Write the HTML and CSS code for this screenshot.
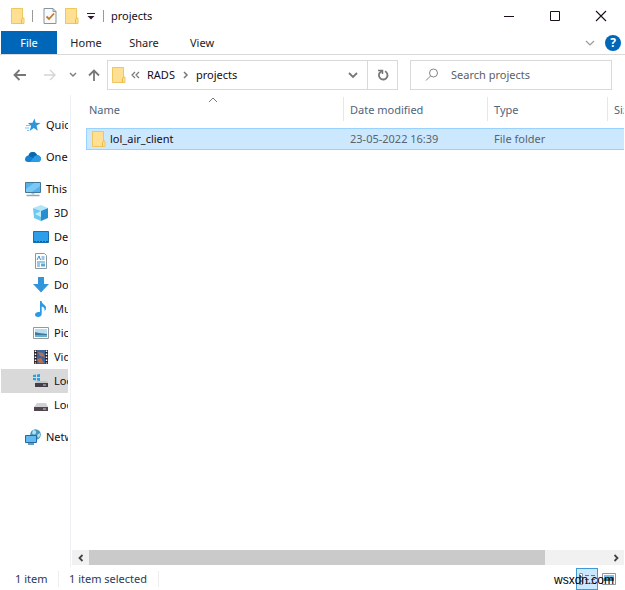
FILE: index.html
```html
<!DOCTYPE html>
<html lang="en">
<head>
<meta charset="utf-8">
<title>projects</title>
<link rel="stylesheet" href="styles.css">
</head>
<body>
<svg class="defs" aria-hidden="true">
  <symbol id="folder" viewBox="0 0 14 16">
    <path d="M.5 .5h11v9.500h1.500v5.500H.5z" fill="#ffe093" stroke="#eec65e"/>
    <path d="M10.500 15.500v-4l1-1.500" fill="none" stroke="#e6b94c"/>
  </symbol>
</svg>
<div class="window">
  <header class="titlebar">
    <svg class="folder" aria-hidden="true"><use href="#folder"/></svg>
    <span class="bar"></span>
    <button class="quick" aria-label="Properties">
      <svg width="14" height="16" viewBox="0 0 14 16"><path d="M1 .5h9l3 3v12H1z" fill="#f8fafc" stroke="#8794a3"/><path d="M10 .5v3h3" fill="none" stroke="#8794a3"/><path d="M3.500 8.500l2.500 2.500 5-5.500" fill="none" stroke="#c57a22" stroke-width="1.800"/></svg>
    </button>
    <button class="quick" aria-label="New folder"><svg class="folder"><use href="#folder"/></svg></button>
    <button class="quick" aria-label="Customize toolbar">
      <svg width="8" height="8" viewBox="0 0 8 8"><path d="M0 1.500h8" stroke="#2b1b2b"/><path d="M.5 4h7L4 7.500z" fill="#2b1b2b"/></svg>
    </button>
    <span class="bar"></span>
    <h1 class="title">projects</h1>
    <div class="controls">
      <button aria-label="Minimize"><svg width="12" height="12" viewBox="0 0 12 12"><path d="M1 6.500h10" stroke="#1b0f1b"/></svg></button>
      <button aria-label="Maximize"><svg width="12" height="12" viewBox="0 0 12 12"><path d="M1.500 1.500h9v9h-9z" fill="none" stroke="#1b0f1b"/></svg></button>
      <button aria-label="Close"><svg width="12" height="12" viewBox="0 0 12 12"><path d="M1 1l10 10M11 1L1 11" stroke="#1b0f1b" stroke-width="1.100"/></svg></button>
    </div>
  </header>
  <nav class="ribbon" aria-label="Ribbon">
    <button class="tab file">File</button>
    <button class="tab">Home</button>
    <button class="tab">Share</button>
    <button class="tab">View</button>
    <div class="ribbon-end">
      <button aria-label="Expand ribbon"><svg width="10" height="8" viewBox="0 0 10 8"><path d="M1 2l4 4 4-4" fill="none" stroke="#9a9a9a" stroke-width="1.200"/></svg></button>
      <button class="help" aria-label="Help">?</button>
    </div>
  </nav>
  <div class="address-row">
    <div class="nav">
      <button aria-label="Back"><svg width="14" height="12" viewBox="0 0 14 12"><path d="M6.500 1L1.500 6l5 5M2 6h11" fill="none" stroke="#777" stroke-width="1.800"/></svg></button>
      <button aria-label="Forward"><svg width="14" height="12" viewBox="0 0 14 12"><path d="M7 1l5 5-5 5M12 6H1" fill="none" stroke="#d4d4d4" stroke-width="1.300"/></svg></button>
      <button class="recent" aria-label="Recent locations"><svg width="8" height="6" viewBox="0 0 8 6"><path d="M1 1l3 3 3-3" fill="none" stroke="#808080" stroke-width="1.500"/></svg></button>
      <button aria-label="Up"><svg width="12" height="14" viewBox="0 0 12 14"><path d="M1 7.500l5-5 5 5M6 3v10" fill="none" stroke="#777" stroke-width="1.800"/></svg></button>
    </div>
    <div class="address">
      <svg class="folder" aria-hidden="true"><use href="#folder"/></svg>
      <svg class="sep" width="9" height="8" viewBox="0 0 9 8" aria-hidden="true"><path d="M4 1L1 4l3 3M8 1L5 4l3 3" fill="none" stroke="#777" stroke-width="1.200"/></svg>
      <a href="#rads">RADS</a>
      <svg class="sep" width="6" height="8" viewBox="0 0 6 8" aria-hidden="true"><path d="M1 1l3 3-3 3" fill="none" stroke="#777" stroke-width="1.500"/></svg>
      <a href="#projects">projects</a>
      <button class="history" aria-label="Previous locations"><svg width="10" height="8" viewBox="0 0 10 8"><path d="M1 2l4 4 4-4" fill="none" stroke="#777" stroke-width="1.800"/></svg></button>
      <button class="refresh" aria-label="Refresh"><svg width="12" height="12" viewBox="0 0 12 12"><path d="M8 2.300A4.300 4.300 0 1 1 2.500 4l2.300-2" fill="none" stroke="#777" stroke-width="1.800"/><path d="M1 1.500h4.500V5" fill="none" stroke="#777" stroke-width="1.500"/></svg></button>
    </div>
    <label class="search">
      <svg width="14" height="14" viewBox="0 0 14 14" aria-hidden="true"><circle cx="8.500" cy="5" r="4" fill="none" stroke="#858585"/><path d="M5.500 8L1 12.500" stroke="#858585"/></svg>
      <input type="text" placeholder="Search projects" aria-label="Search projects">
    </label>
  </div>
  <div class="body">
    <nav class="tree" aria-label="Folders">
      <a class="root" href="#quick"><svg viewBox="0 0 16 16"><path d="M9.500 1.500l1.200 4.300 4.800.2-4 2.700 1.300 5-4-2.700-4.200 3 1.500-5L3 6l4.500-.2z" fill="#2d95dc"/><path d="M1 8.500h4M0 11h4M2 13.500h2" stroke="#80c5ed"/></svg>Quick access</a>
      <a class="root" href="#onedrive"><svg viewBox="0 0 16 16"><path d="M0 10.500C0 8 2 6.500 3.500 6.500 4 4 6 3 8 3s3.500 1.500 4 3c2.500 0 4 1.800 4 3.700S14.500 13 13 13H3C1 13 0 12 0 10.500z" fill="#1681d1"/><path d="M3.500 6.500C4 4 6 3 8 3s3.500 1.500 4 3L8 9z" fill="#0869ae"/><path d="M5 13l4-5c1-1.500 3-2 4-1.500 2 .5 3 2 3 3.500S14.500 13 13 13z" fill="#2a9be5"/></svg>OneDrive</a>
      <a class="root" href="#pc"><svg viewBox="0 0 16 16"><path d="M.5 1.500h15v10H.5z" fill="#55b2ee" stroke="#437998"/><path d="M1 8l8-6h6v3L7 11H1z" fill="#7bcaf5"/><path d="M6.500 12h3v1.500h-3z" fill="#b7c5ce"/><path d="M1.500 14.500h13" stroke="#9aa6ad" stroke-width="1.500"/></svg>This PC</a>
      <a href="#objects"><svg viewBox="0 0 16 16"><path d="M8 0l7 3-7 3-8-3z" fill="#b2e5f8"/><path d="M0 3l8 3v10l-7-3z" fill="#6cc9ef"/><path d="M15 3L8 6v10l7-3z" fill="#278fcf"/><path d="M2 9l6-3v6z" fill="#c1ecfb"/></svg>3D Objects</a>
      <a href="#desktop"><svg viewBox="0 0 16 16"><path d="M.5 2.500h15v11H.5z" fill="#2c9eea" stroke="#176fab"/><path d="M1 12.500h14" stroke="#0e609b" stroke-dasharray="2 1"/></svg>Desktop</a>
      <a href="#documents"><svg viewBox="0 0 16 16"><path d="M2.500 .5h9l2 2v13h-11z" fill="#fff" stroke="#8d989f"/><path d="M4 7l2-4 1.500 4M8.500 4h3M8.500 6h3M4 9h8M4 11h3M4 13h3" fill="none" stroke="#3b91c8"/><path d="M8 10.500h4v3H8z" fill="#58acd8"/></svg>Documents</a>
      <a href="#downloads"><svg viewBox="0 0 16 16"><path d="M5 0h6v7h5l-8 8.500L0 7h5z" fill="#3095db"/></svg>Downloads</a>
      <a href="#music"><svg viewBox="0 0 16 16"><path d="M7 0h1.500c.5 3.500 5 4 4.500 7.500-.3 1.500-1 2-1.500 2.500.5-3-1-4-2.800-4.500V13c0 2-1.700 3-3.700 3S2 15 2 13.500 4 10.500 7 11z" fill="#2a9ae2"/></svg>Music</a>
      <a href="#pictures"><svg viewBox="0 0 16 16"><path d="M.5 2.500h15v11H.5z" fill="#fff" stroke="#929a9f"/><path d="M2 4h12v8H2z" fill="#b5def2"/><path d="M2 7l4 1 8 1v3H2z" fill="#407a99"/><path d="M2 10h12v2H2z" fill="#68aecd"/></svg>Pictures</a>
      <a href="#videos"><svg viewBox="0 0 16 16"><path d="M1 1h14v14H1z" fill="#28212e"/><path d="M4 1h8v14H4z" fill="#3c65a0"/><path d="M5 3l5 1 2 4-5-1zM4 10l4-1 3 5H6z" fill="#b66f4f"/><path d="M2.500 1.500v13M13.500 1.500v13" stroke="#fff" stroke-width="1.500" stroke-dasharray="1.500 1.500"/></svg>Videos</a>
      <a class="current" href="#c" aria-current="true"><svg viewBox="0 0 16 16"><path d="M0 2l3-.5V4H0zM4 1.500L7 1v3H4zM0 5h3v2.500L0 7zM4 5h3v3l-3-.5z" fill="#2c9fe2"/><path d="M4 8h10l1 2H2z" fill="#c5c5c8"/><path d="M2 10h13v4H2z" fill="#473c4a"/><path d="M10 12h3" stroke="#a9e5ca"/></svg>Local Disk (C:)</a>
      <a href="#d"><svg viewBox="0 0 16 16"><path d="M4 6h9l2 4H1z" fill="#d0d0d2"/><path d="M1 10h14v4H1z" fill="#51464f"/><path d="M10 12h3" stroke="#b8d9cb"/></svg>Local Disk (D:)</a>
      <a class="root network" href="#network"><svg viewBox="0 0 16 16"><circle cx="10.500" cy="5.500" r="5.300" fill="#4795bf"/><path d="M8 1c2 0 4 1 3 3S8 6 7 4zM12 6l3-2v3l-2 2z" fill="#b3dfed"/><path d="M.5 6.500h11v7H.5z" fill="#62baf0" stroke="#26699c"/><path d="M3 15h6" stroke="#367daf" stroke-width="1.500"/></svg>Network</a>
    </nav>
    <main class="files">
      <svg class="sort" width="10" height="6" viewBox="0 0 10 6" aria-hidden="true"><path d="M1 5l4-4 4 4" fill="none" stroke="#777"/></svg>
      <table>
        <colgroup><col><col class="date"><col class="type"><col class="size"></colgroup>
        <thead><tr><th><div>Name</div></th><th><div>Date modified</div></th><th><div>Type</div></th><th><div>Size</div></th></tr></thead>
        <tbody><tr><td><div class="name"><svg class="folder" aria-hidden="true"><use href="#folder"/></svg>lol_air_client</div></td><td>23-05-2022 16:39</td><td>File folder</td><td></td></tr></tbody>
      </table>
      <div class="scroll">
        <button aria-label="Scroll left"><svg width="8" height="8" viewBox="0 0 8 8"><path d="M5.500 1l-3 3 3 3" fill="none" stroke="#444" stroke-width="1.800"/></svg></button>
        <div class="track"><div class="thumb"></div></div>
        <button aria-label="Scroll right"><svg width="8" height="8" viewBox="0 0 8 8"><path d="M2.500 1l3 3-3 3" fill="none" stroke="#444" stroke-width="1.800"/></svg></button>
      </div>
    </main>
  </div>
  <footer class="status">
    <span class="count">1 item</span>
    <span class="chosen">1 item selected</span>
    <div class="views">
      <button class="active" aria-label="Details view"><svg width="18" height="14" viewBox="0 0 18 14"><path d="M1.500 1.500h3v3h-3zM1.500 5.500h3v3h-3zM1.500 9.500h3v3h-3z" fill="#fff" stroke="#8b96a0"/><path d="M7 3.500h10M7 7.500h10M7 11.500h10" stroke="#6b757e" stroke-dasharray="4 2"/></svg></button>
      <button aria-label="Large icons view"><svg width="14" height="12" viewBox="0 0 14 12"><path d="M.5 .5h13v11H.5z" fill="#fff" stroke="#8b96a0"/><path d="M2 2h10v5H2z" fill="#7cc0e6"/><path d="M2 5l5 1 5-2v4H2z" fill="#35789c"/></svg></button>
    </div>
    <span class="mark">wsxdn.com</span>
  </footer>
</div>
</body>
</html>
```
FILE: styles.css
```css
* { box-sizing: border-box; }
body {
  margin: 0;
  background: #fff;
  color: #140c18;
  font: 11px/16px "Noto Sans", "Open Sans", sans-serif;
}
button {
  display: flex;
  align-items: center;
  justify-content: center;
  padding: 0;
  border: 0;
  background: none;
  color: inherit;
  font: inherit;
}
a { color: inherit; text-decoration: none; }
svg { display: block; flex: none; }
.defs { position: absolute; width: 0; height: 0; }
.folder { width: 14px; height: 16px; }
.window { display: flex; flex-direction: column; height: 100vh; overflow: hidden; }

.titlebar { display: flex; align-items: center; height: 31px; padding: 0 1px 0 11px; flex: none; }
.bar { width: 1px; height: 12px; background: #999; margin: 0 10px 0 7px; }
.quick { margin-right: 8px; }
.quick + .bar { margin: 0 7px 0 0; }
.title { margin: 0; font-size: 11px; font-weight: 400; }
.controls { display: flex; margin-left: auto; height: 100%; }
.controls button { width: 46px; }

.ribbon { display: flex; height: 24px; border-bottom: 1px solid #dadada; padding-left: 1px; flex: none; }
.tab { width: 58px; color: #222; }
.tab.file { width: 56px; background: #0067b8; color: #fff; }
.ribbon-end { display: flex; align-items: center; gap: 10px; margin-left: auto; padding-right: 4px; }
.help { width: 16px; height: 16px; border-radius: 50%; background: #0067b8; color: #fff; font-size: 12px; font-weight: 700; }

.address-row { display: flex; align-items: center; height: 40px; padding-right: 13px; flex: none; }
.nav { display: flex; align-items: center; width: 107px; padding-left: 13px; gap: 16px; flex: none; }
.nav .recent { margin: 0 -5px 0 -4px; }
.address { display: flex; align-items: center; flex: 291 1 291px; min-width: 0; height: 30px; border: 1px solid #d9d9d9; padding-left: 4px; }
.address a { margin: 0 8px 0 7px; }
.address .folder { margin-right: 5px; }
.history { margin-left: auto; width: 29px; height: 28px; }
.refresh { width: 30px; height: 28px; border-left: 1px solid #d9d9d9; }
.search { display: flex; align-items: center; flex: 202 1 202px; min-width: 0; height: 30px; margin-left: 12px; border: 1px solid #d9d9d9; padding-left: 14px; gap: 12px; }
.search input { flex: 1; min-width: 0; border: 0; padding: 0; outline: 0; background: none; font: inherit; }
.search input::placeholder { color: #606060; opacity: 1; }

.body { display: flex; flex: 1; min-height: 0; }
.tree { width: 71px; border-right: 1px solid #edf1f5; padding: 18px 2px 0 1px; flex: none; }
.tree a { display: flex; align-items: center; gap: 5px; height: 24px; padding-left: 32px; overflow: hidden; white-space: nowrap; }
.tree .root { padding-left: 24px; }
.tree .root + .root, .tree .network { margin-top: 8px; }
.tree svg { width: 16px; height: 16px; }
.tree .current { background: #d9d9d9; }

.files { position: relative; display: flex; flex-direction: column; flex: 1; min-width: 0; }
.sort { position: absolute; left: 137px; top: 2px; }
table { table-layout: fixed; width: calc(100% - 16px); margin: 0 1px 0 15px; border-spacing: 0; }
.date { width: 144px; }
.type { width: 120px; }
.size { width: 17px; }
th { height: 33px; padding: 2px 0 7px; text-align: left; font-weight: 400; color: #52647a; vertical-align: top; }
th div { height: 24px; padding: 5px 0 0 6px; border-left: 1px solid #e3e8ec; overflow: hidden; white-space: nowrap; }
th:first-child div { border: 0; padding-left: 3px; }
td { height: 22px; padding: 0 0 0 7px; background: #cce8ff; border: solid #99d1ff; border-width: 1px 0; color: #59636d; }
td:first-child { padding-left: 5px; border-left-width: 1px; color: #140c18; }
.name { display: flex; align-items: center; gap: 4px; }
.scroll { display: flex; height: 15px; margin: auto 1px 2px; background: #f1f1f1; }
.scroll button { width: 17px; }
.track { flex: 1; }
.thumb { width: 88%; height: 100%; background: #cacaca; }

.status { position: relative; display: flex; align-items: center; height: 23px; padding-left: 15px; color: #28395c; flex: none; }
.status span { white-space: nowrap; }
.count { width: 44px; border-right: 1px solid #eee; }
.chosen { width: 90px; margin-left: 10px; border-right: 1px solid #eee; }
.views { display: flex; align-items: center; margin-left: auto; padding-right: 9px; gap: 4px; }
.views .active { width: 22px; height: 22px; background: #cce8ff; border: 1px solid #3d9ad6; }
.status .mark { position: absolute; right: 11px; bottom: 2px; color: #000; font: 12px/16px "Liberation Sans", sans-serif; }
```
